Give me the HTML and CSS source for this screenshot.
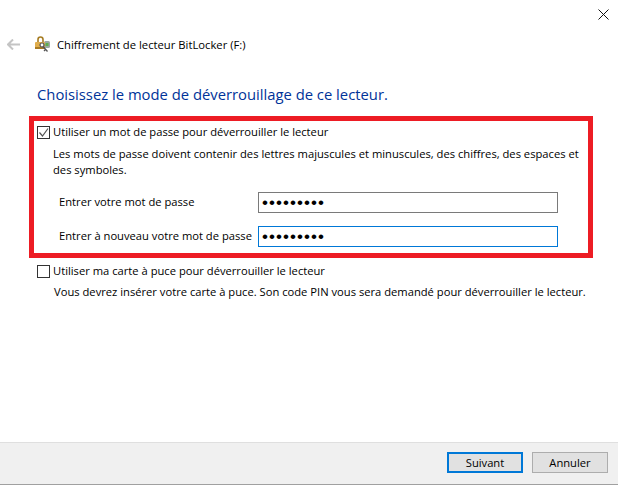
FILE: index.html
```html
<!DOCTYPE html>
<html lang="fr">

<head>
  <meta charset="UTF-8">
  <title>Chiffrement de lecteur BitLocker (F:)</title>
  <link rel="stylesheet" href="styles.css">
</head>

<body>

  <div class="wizard">
    <div class="close-row">
      <svg class="close" width="11" height="11" viewBox="0 0 11 11">
        <path d="M.5.5l10 10M10.5.5l-10 10" stroke="#111" fill="none" />
      </svg>
    </div>

    <div class="title-row">
      <svg class="back" width="13" height="11" viewBox="0 0 13 11">
        <path d="M6 .5L1 5.500l5 5M1 5.500h12" stroke="#c4c4c4" stroke-width="2" fill="none" />
      </svg>
      <svg class="app-icon" width="16" height="17" viewBox="0 0 16 17">
        <path d="M3 6.500V3.500a2.500 2.500 0 0 1 5 0v3" stroke="#a67c22" stroke-width="1.600" fill="none" />
        <rect x="9" y="5" width="6" height="7" rx="1.500" fill="#9aa8a2" />
        <rect x="10.500" y="7" width="3" height="3" fill="#5fae4c" />
        <rect x="0" y="6" width="10" height="7" rx="1" fill="#e0ad4c" />
        <path d="M0 11h10v2H0z" fill="#a87a22" />
        <circle cx="7" cy="9" r="2" fill="#fff" stroke="#555" stroke-width="1.200" />
        <path d="M8 10.500l4.500 5M10.500 13.500L9 15" stroke="#555" stroke-width="1.300" fill="none" />
      </svg>
      <span class="title">Chiffrement de lecteur BitLocker (F:)</span>
    </div>

    <h1 class="heading">Choisissez le mode de déverrouillage de ce lecteur.</h1>

    <div class="highlight">
      <label class="check-row">
        <span class="box">
          <svg width="11" height="11" viewBox="0 0 11 11">
            <path d="M1.500 5.500l3 3.500 5.500-7.500" stroke="#555" stroke-width="1.200" fill="none" />
          </svg>
        </span>
        <span class="check-text">Utiliser un mot de passe pour déverrouiller le lecteur</span>
      </label>
      <p class="hint">Les mots de passe doivent contenir des lettres majuscules et minuscules, des chiffres, des espaces et des symboles.</p>
      <div class="field field-first">
        <span class="field-label">Entrer votre mot de passe</span>
        <input class="pass" type="password" value="123456789">
      </div>
      <div class="field">
        <span class="field-label">Entrer à nouveau votre mot de passe</span>
        <input class="pass focus" type="password" value="123456789">
      </div>
    </div>

    <label class="check-row second">
      <span class="box"></span>
      <span class="check-text">Utiliser ma carte à puce pour déverrouiller le lecteur</span>
    </label>
    <p class="hint second-hint">Vous devrez insérer votre carte à puce. Son code PIN vous sera demandé pour déverrouiller le lecteur.</p>

    <div class="footer">
      <div class="btn primary">Suivant</div>
      <div class="btn">Annuler</div>
    </div>
  </div>

</body>

</html>
```

FILE: styles.css
```css
* {
  box-sizing: border-box;
}

html,
body {
  margin: 0;
  height: 100%;
  background-color: #fff;
}

body {
  font-family: "Open Sans", "Noto Sans", sans-serif;
  font-size: 11.2px;
  color: #000;
}

.wizard {
  height: 485px;
  display: flex;
  flex-direction: column;
}

.close-row {
  height: 36px;
  padding: 9px 9px 0 0;
  display: flex;
  justify-content: flex-end;
}

.close {
  display: block;
}

.title-row {
  height: 17px;
  display: flex;
  align-items: center;
  padding-left: 7px;
}

.back {
  margin-right: 15px;
}

.app-icon {
  margin-right: 6px;
}

.title {
  font-size: 11.25px;
}

.heading {
  margin: 29px 0 0 37px;
  height: 24px;
  line-height: 24px;
  font-size: 14.8px;
  font-weight: normal;
  color: #003399;
}

.highlight {
  margin: 10px 25px 0 29px;
  height: 142px;
  border: 5px solid #ed1c24;
  padding: 3px 3px 0 3px;
}

.check-row {
  display: flex;
  align-items: center;
  gap: 3px;
  height: 16px;
}

.check-text {
  padding-bottom: 2px;
}

.box {
  width: 13px;
  height: 13px;
  border: 1px solid #333;
  display: flex;
  align-items: center;
  justify-content: center;
}

.hint {
  margin: 6px 0 0 16px;
  line-height: 16px;
}

.field {
  display: flex;
  align-items: center;
  justify-content: space-between;
  height: 21px;
  margin: 13px 27px 0 22px;
}

.field-first {
  margin-top: 14px;
}

.field-label {
  padding-bottom: 2px;
}

.pass {
  width: 300px;
  height: 21px;
  border: 1px solid #7a7a7a;
  padding: 0 3px;
  font-size: 17px;
  letter-spacing: 1.05px;
  font-family: "Liberation Sans", sans-serif;
  color: #000;
  outline: none;
  background-color: #fff;
}

.pass.focus {
  border-color: #0078d7;
}

.second {
  margin: 5px 0 0 37px;
}

.second-hint {
  margin: 5px 0 0 54px;
}

.footer {
  margin-top: auto;
  height: 43px;
  border-top: 1px solid #dfdfdf;
  border-bottom: 1px solid #a0a0a0;
  background-color: #f0f0f0;
  display: flex;
  justify-content: flex-end;
  gap: 9px;
  padding: 9px 10px 0 0;
}

.btn {
  width: 76px;
  height: 21px;
  border: 1px solid #adadad;
  background-color: #e1e1e1;
  text-align: center;
  line-height: 19px;
}

.btn.primary {
  border: 2px solid #0078d7;
  line-height: 17px;
}
```
